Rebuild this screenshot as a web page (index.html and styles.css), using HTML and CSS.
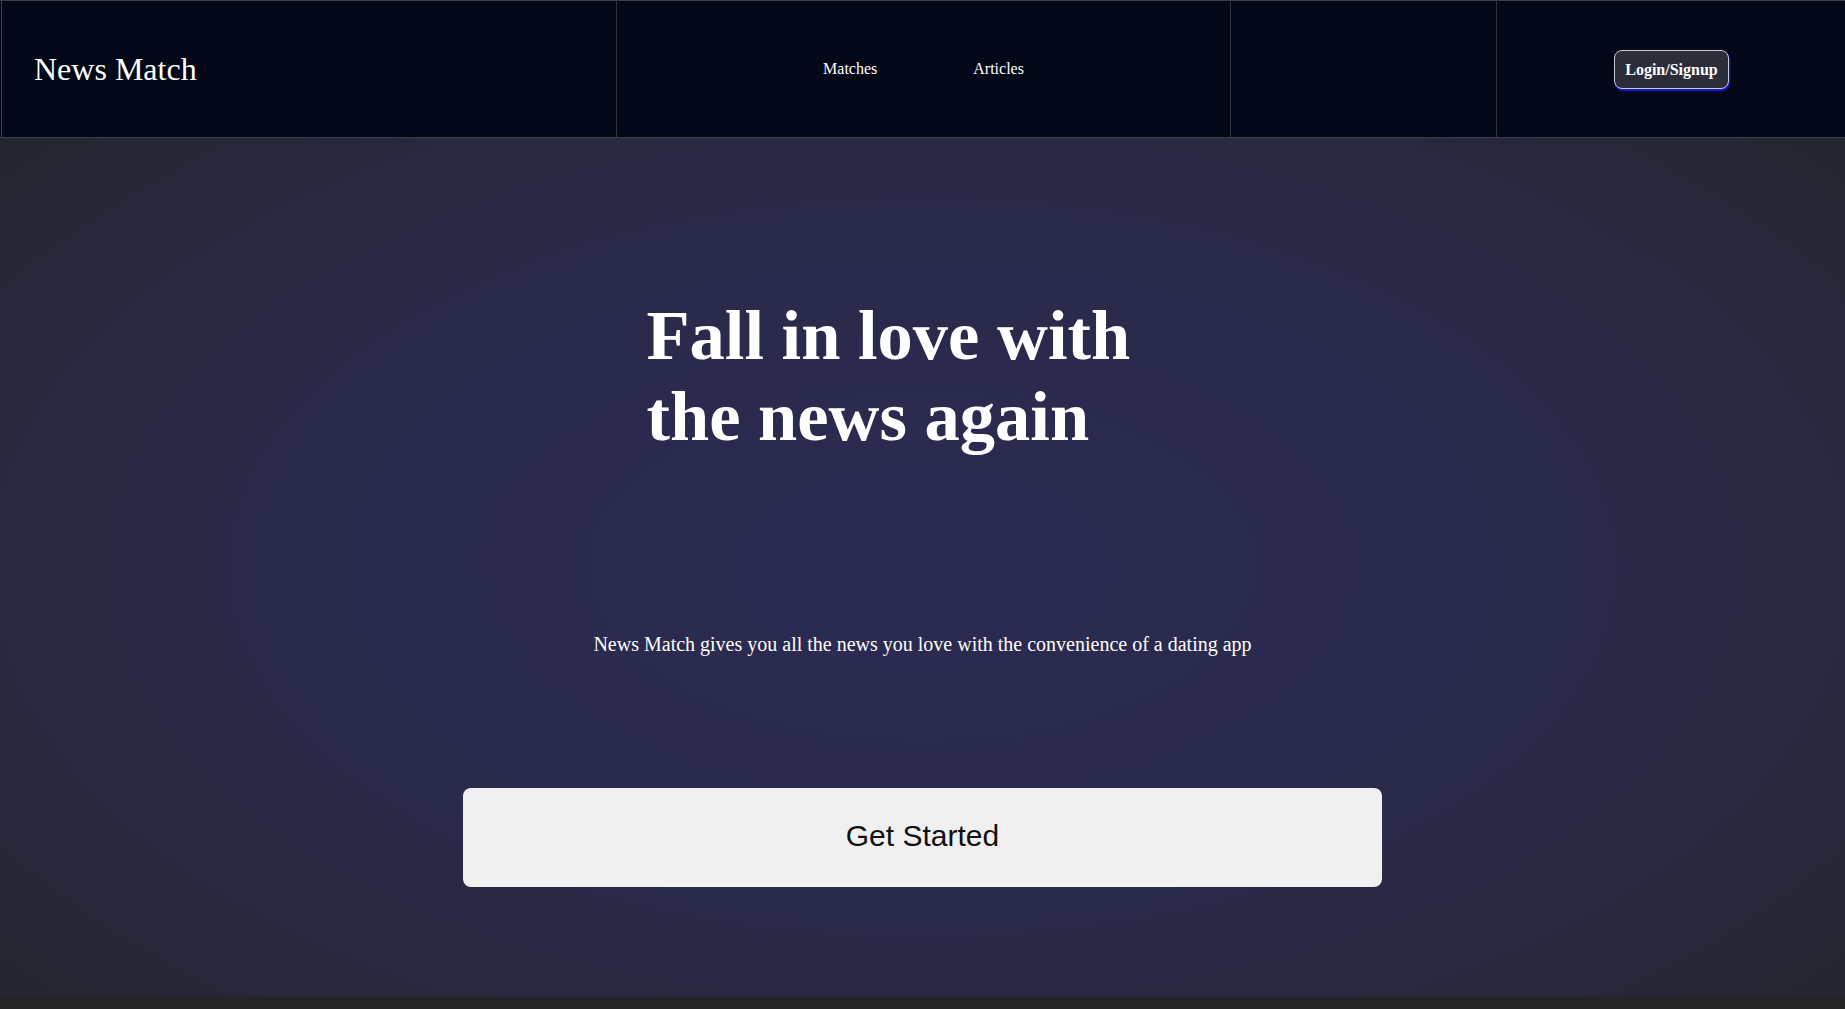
FILE: index.html
```html
<!DOCTYPE html>
<html lang="en">
<head>
<meta charset="utf-8">
<title>News Match</title>
<link rel="stylesheet" href="styles.css">
</head>
<body>
<header class="topbar">
  <div class="cell cell-logo"><span class="logo">News Match</span></div>
  <nav class="cell cell-nav">
    <a class="nav-link" href="#">Matches</a>
    <a class="nav-link" href="#">Articles</a>
  </nav>
  <div class="cell cell-empty"></div>
  <div class="cell cell-auth"><button class="login-btn" type="button">Login/Signup</button></div>
</header>
<main class="hero">
  <h1 class="hero-title">Fall in love with the news again</h1>
  <p class="hero-text">News Match gives you all the news you love with the convenience of a dating app</p>
  <button class="start-btn" type="button">Get Started</button>
</main>
</body>
</html>
```
FILE: styles.css
```css
html, body {
  margin: 0;
  padding: 0;
}
body {
  background: #242424;
  font-family: "Liberation Serif", "Times New Roman", serif;
  color: #ffffff;
  height: 1009px;
  overflow: hidden;
}
.topbar {
  display: grid;
  grid-template-columns: 617px 614px 266px 1fr;
  height: 136px;
  background: #020817;
  border-top: 1px solid #3d4049;
  border-bottom: 1px solid #3d4049;
  box-sizing: content-box;
}
.cell {
  display: flex;
  align-items: center;
  border-right: 1px solid #30333d;
  box-sizing: border-box;
}
.cell-logo {
  border-left: 1px solid #3d4049;
  margin-left: 1px;
  padding-left: 32px;
}
.logo {
  font-size: 32px;
  color: #ffffff;
}
.cell-nav {
  justify-content: center;
  gap: 96px;
}
.nav-link {
  color: #ffffff;
  text-decoration: none;
  font-size: 16px;
}
.cell-auth {
  border-right: none;
  justify-content: center;
}
.login-btn {
  font-family: "Liberation Serif", "Times New Roman", serif;
  font-weight: bold;
  font-size: 16px;
  line-height: 19px;
  color: #ffffff;
  background: #2b2e39;
  border: 1px solid #c9cbd3;
  border-radius: 8px;
  padding: 9px 10px;
  box-shadow: 1px 2px 2px #1a1adf;
  margin-left: 1px;
}
.hero {
  height: 859px;
  background: radial-gradient(ellipse 70% 80% at 50% 50%, #2b2a52 0%, #2a2a4c 45%, #27273a 80%, #25252d 100%);
  display: flex;
  flex-direction: column;
  align-items: center;
  box-sizing: border-box;
  padding-top: 157px;
}
.hero-title {
  width: 552px;
  margin: 0;
  font-size: 70.5px;
  font-weight: bold;
  line-height: 81px;
  text-align: left;
  color: #ffffff;
}
.hero-text {
  margin: 176px 0 0;
  font-size: 20px;
  line-height: 23px;
  color: #ffffff;
}
.start-btn {
  margin-top: 132px;
  width: 919px;
  height: 99px;
  padding: 0 0 4px;
  background: #f0f0f0;
  border: none;
  border-radius: 8px;
  font-family: "Liberation Sans", Arial, sans-serif;
  font-size: 30px;
  color: #111111;
}
```
